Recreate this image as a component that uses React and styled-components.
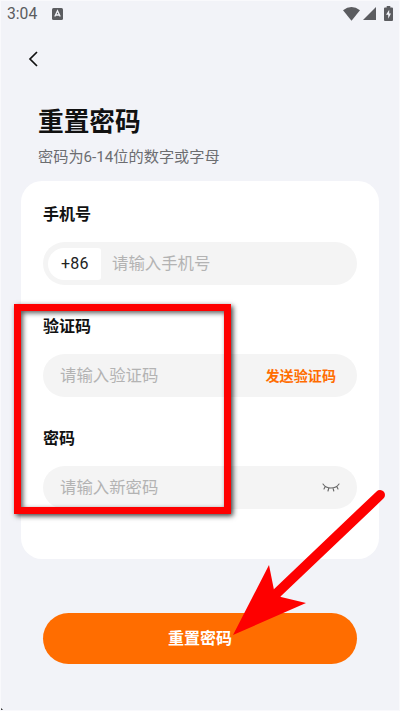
/*
 * ResetPassword
 *
 * Phone screen with the reset password form and the two red guide marks
 */

import React from 'react';
import styled, { createGlobalStyle } from 'styled-components';

const GlobalStyle = createGlobalStyle`
  * {
    box-sizing: border-box;
  }

  body {
    margin: 0;
    overflow: hidden;
    font-family: Roboto, 'Noto Sans CJK SC', sans-serif;
  }
`;

const Screen = styled.main`
  position: relative;
  display: flex;
  flex-direction: column;
  width: 400px;
  height: 711px;
  overflow: hidden;
  background: #f2f3f8;
  border: 1px solid #f9f9fc;
`;

const StatusBar = styled.header`
  display: flex;
  align-items: center;
  height: 25px;
  padding: 0 6px;
  color: #5b5c60;
`;

const Clock = styled.span`
  width: 45px;
  font-size: 15.7px;
  line-height: 26px;
`;

const StatusIcons = styled.span`
  display: flex;
  align-items: center;
  gap: 3px;
  margin-left: auto;

  & > svg:last-child {
    margin-left: 5px;
  }
`;

const BackButton = styled.button`
  width: 18px;
  height: 18px;
  margin: 23px 0 0 24px;
  padding: 0;
  border: none;
  background: none;

  svg {
    display: block;
  }
`;

const Heading = styled.div`
  padding: 35px 0 0 37px;
`;

const Title = styled.h1`
  margin: 0;
  color: #111;
  font-size: 25.7px;
  font-weight: 700;
  line-height: 40px;
`;

const Hint = styled.p`
  margin: 4px 0 0;
  color: #6c6d70;
  font-size: 15.2px;
  line-height: 22px;
`;

const Card = styled.form`
  display: flex;
  flex-direction: column;
  gap: 31px;
  height: 378px;
  margin: 13px 20px 0;
  padding: 23px 22px 0;
  border-radius: 21px;
  background: #fff;
`;

const Label = styled.label`
  display: block;
  height: 22px;
  margin-bottom: 16px;
  color: #111;
  font-size: 16px;
  font-weight: 700;
  line-height: 22px;
`;

const Field = styled.div`
  display: flex;
  align-items: center;
  height: 43px;
  padding: 0 17px 0 ${props => (props.$prefixed ? '5px' : '17px')};
  border-radius: 22px;
  background: #f4f4f4;
`;

const AreaCode = styled.span`
  width: 53px;
  height: 32px;
  margin-right: 11px;
  padding-left: 13px;
  border-radius: 16px 3px 3px 16px;
  background: #fff;
  color: #222;
  font-size: 16px;
  letter-spacing: 0.2px;
  line-height: 32px;
`;

const Placeholder = styled.span`
  flex: 1;
  color: #b3b3b3;
  font-size: 16.4px;
  line-height: 24px;
`;

const SendCode = styled.span`
  margin-right: 4px;
  color: #ff6d00;
  font-size: 14.1px;
  font-weight: 700;
  line-height: 20px;
`;

const Submit = styled.button`
  height: 51px;
  margin: 54px 42px 0;
  padding: 0;
  border: none;
  border-radius: 26px;
  background: #ff6d00;
  color: #fff;
  font-family: inherit;
  font-size: 16px;
  font-weight: 700;
  line-height: 51px;
`;

const Highlight = styled.div`
  position: absolute;
  top: 303px;
  left: 13px;
  width: 217px;
  height: 210px;
  border: 7px solid #fe0000;
  box-shadow: 2px 2px 5px rgba(0, 0, 0, 0.75),
    inset 2px 2px 5px rgba(0, 0, 0, 0.65);
`;

const Arrow = styled.svg`
  position: absolute;
  top: 479px;
  left: 219px;
`;

const Corner = styled.svg`
  position: absolute;
  bottom: -1px;
  left: -1px;
`;

const KeyboardIcon = () => (
  <svg width="11" height="12" viewBox="0 0 11 12">
    <rect width="11" height="12" rx="1.5" fill="#5b5c60" />
    <path
      d="M2.8 8.5 5.5 2.8 8.2 8.5M3.8 7h3.4"
      fill="none"
      stroke="#f2f3f8"
      strokeWidth="1.3"
    />
  </svg>
);

const WifiIcon = () => (
  <svg width="17" height="14" viewBox="0 0 17 14">
    <path d="M0 3.2Q8.5-3 17 3.2L8.5 13.7Z" fill="currentColor" />
  </svg>
);

const SignalIcon = () => (
  <svg width="13" height="13" viewBox="0 0 13 13">
    <path d="M13 0v13H0Z" fill="currentColor" />
  </svg>
);

const BatteryIcon = () => (
  <svg width="9" height="15" viewBox="0 0 9 15">
    <path
      d="M2.7 0h3.6v1.5H8q1 0 1 1V14q0 1-1 1H1q-1 0-1-1V2.5q0-1 1-1h1.7Z"
      fill="currentColor"
    />
    <path d="M5.2 3.7 2 8.8h2.2v4L7 7.5H5.2Z" fill="#f2f3f8" />
  </svg>
);

const ClosedEyeIcon = () => (
  <svg
    width="18"
    height="10"
    viewBox="0 0 18 10"
    fill="none"
    stroke="#666"
    strokeWidth="1.1"
    strokeLinecap="round"
  >
    <path d="M1 1q2.5 4 8 4t8-4M3.2 3.4 2 6M6.8 5l-.8 3M11 5l.8 3M14.8 3.4 16 6" />
  </svg>
);

export default function App() {
  return (
    <Screen>
      <GlobalStyle />
      <StatusBar>
        <Clock>3:04</Clock>
        <KeyboardIcon />
        <StatusIcons>
          <WifiIcon />
          <SignalIcon />
          <BatteryIcon />
        </StatusIcons>
      </StatusBar>
      <BackButton aria-label="返回">
        <svg width="18" height="18" viewBox="0 0 18 18">
          <path
            d="M12 3 5 10l7 7"
            fill="none"
            stroke="#111"
            strokeWidth="1.7"
          />
        </svg>
      </BackButton>
      <Heading>
        <Title>重置密码</Title>
        <Hint>密码为6-14位的数字或字母</Hint>
      </Heading>
      <Card>
        <div>
          <Label>手机号</Label>
          <Field $prefixed>
            <AreaCode>+86</AreaCode>
            <Placeholder>请输入手机号</Placeholder>
          </Field>
        </div>
        <div>
          <Label>验证码</Label>
          <Field>
            <Placeholder>请输入验证码</Placeholder>
            <SendCode>发送验证码</SendCode>
          </Field>
        </div>
        <div>
          <Label>密码</Label>
          <Field>
            <Placeholder>请输入新密码</Placeholder>
            <ClosedEyeIcon />
          </Field>
        </div>
      </Card>
      <Submit>重置密码</Submit>
      <Highlight />
      <Arrow width="180" height="170" viewBox="220 480 180 170">
        <path
          d="M380 495 276 594"
          stroke="#fe0000"
          strokeWidth="10"
          strokeLinecap="round"
        />
        <path d="M233 635 269 565 274 590 281 597 306 603Z" fill="#fe0000" />
      </Arrow>
      <Corner width="4" height="4" viewBox="0 0 4 4">
        <path d="M0 0v1.5L2.5 4H4Z" fill="#222" />
      </Corner>
    </Screen>
  );
}
